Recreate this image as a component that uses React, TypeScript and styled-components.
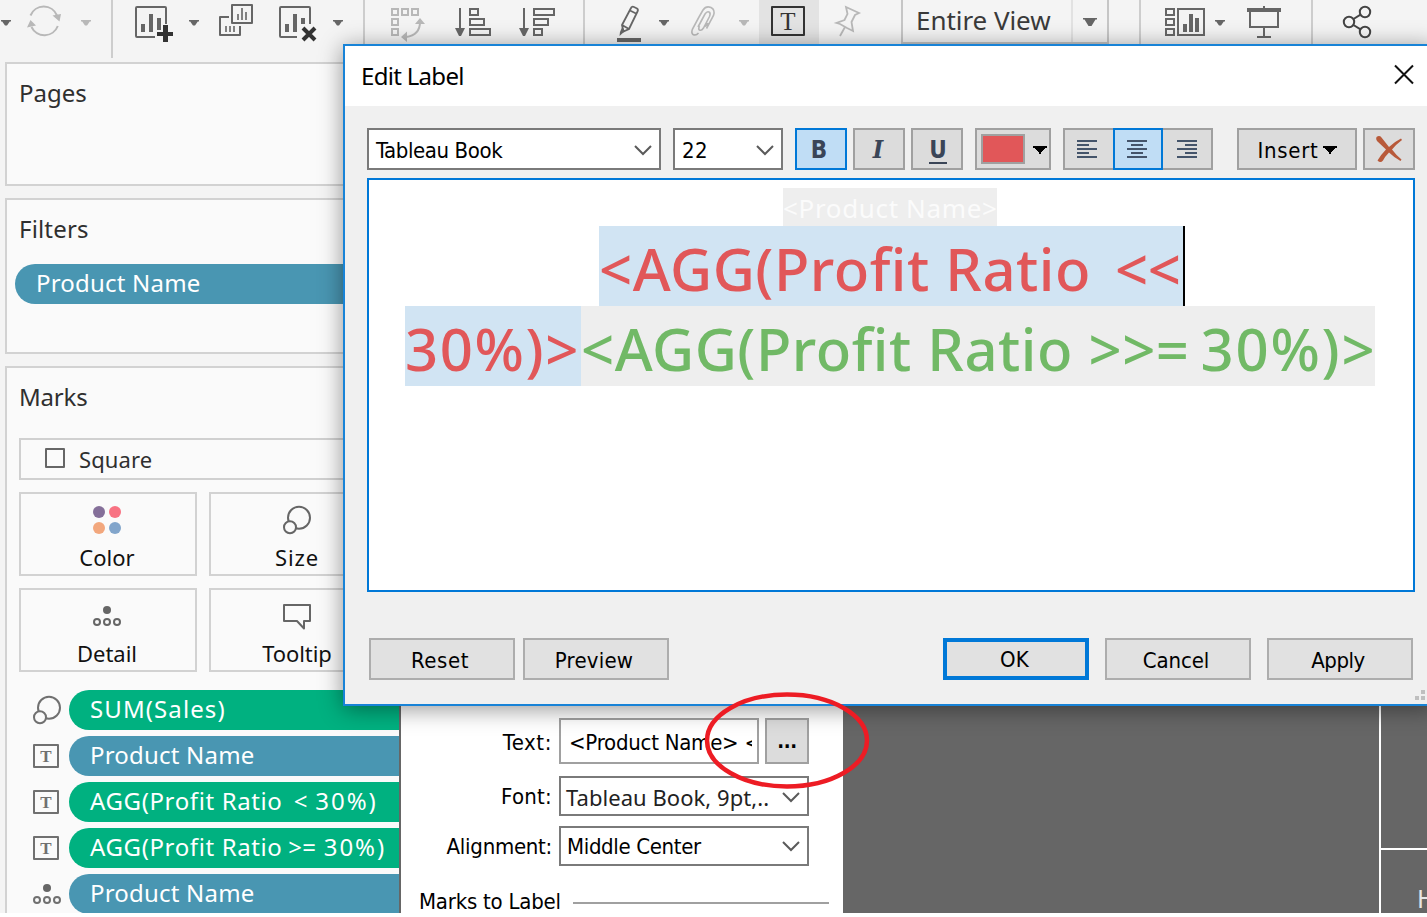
import React from "react";
import styled, { createGlobalStyle, css } from "styled-components";

const uiFont = '"Noto Sans", "Open Sans", sans-serif';
const formFont = '"DejaVu Sans Condensed", "DejaVu Sans", sans-serif';
const ink = "#666666";
const faded = "#b8b8b8";

const GlobalStyle = createGlobalStyle`
  *, *::before, *::after { box-sizing: border-box; }
  body { margin: 0; background: #ffffff; }
`;

const Screen = styled.div`
  position: relative;
  width: 1427px;
  height: 913px;
  overflow: hidden;
  background: #f4f4f4;
  font-family: ${uiFont};
  color: #2f2f2f;
  display: flex;
  flex-direction: column;
`;

/* ---------- Toolbar ---------- */

const Toolbar = styled.header`
  display: flex;
  height: 62px;
  flex: none;
`;

const Drawing = styled.svg`
  display: block;
  flex: none;
  fill: none;
  stroke-width: 2;
`;

const Separator = styled.span`
  width: 2px;
  height: 58px;
  flex: none;
  background: #cdcdcd;
`;

const ActiveTool = styled.div`
  width: 60px;
  height: 44px;
  flex: none;
  background: #e3e3e3;
  display: flex;
  justify-content: center;
  padding: 6px 2px 0 0;
  margin-right: 4px;
`;

const LetterBox = styled.span<{ $small?: boolean }>`
  display: flex;
  align-items: center;
  justify-content: center;
  width: ${(p) => (p.$small ? 26 : 34)}px;
  height: ${(p) => (p.$small ? 24 : 30)}px;
  border: 2px solid ${(p) => (p.$small ? "#707070" : "#333333")};
  border-radius: 1px;
  color: ${(p) => (p.$small ? "#707070" : "#333333")};
  font: ${(p) => (p.$small ? "bold 17px" : "25px")} / 1 "Liberation Serif", serif;
`;

const ViewSelect = styled.div`
  display: flex;
  width: 208px;
  height: 44px;
  flex: none;
  border: 2px solid #c6c6c6;
  border-top: 0;
`;

const ViewName = styled.span`
  width: 168px;
  padding-left: 13px;
  font-size: 26px;
  line-height: 40px;
  letter-spacing: -0.05px;
  color: #3a3a3a;
  white-space: nowrap;
`;

const ViewArrow = styled.span`
  flex: 1;
  border-left: 2px solid #e2e2e2;
  padding-top: 18px;
  padding-left: 10px;
`;

/* ---------- Side shelves ---------- */

const Body = styled.div`
  display: flex;
  flex: 1;
  min-height: 0;
`;

const Sidebar = styled.aside`
  width: 399px;
  flex: none;
  padding-left: 5px;
  display: flex;
  flex-direction: column;
  gap: 12px;
`;

const Card = styled.section<{ $height: number }>`
  height: ${(p) => p.$height}px;
  flex: none;
  border: 2px solid #d2d2d2;
  border-right: 0;
  background: #fafafa;
  padding-top: 14px;
`;

const CardTitle = styled.h2<{ $spacing?: number }>`
  margin: 0 0 0 12px;
  font-size: 24px;
  font-weight: 400;
  line-height: 30px;
  letter-spacing: ${(p) => p.$spacing ?? 0}px;
`;

const Pill = styled.div<{ $measure?: boolean; $spacing?: number }>`
  flex: 1;
  height: 40px;
  padding-left: 21px;
  border-radius: 20px 0 0 20px;
  background: ${(p) => (p.$measure ? "#00b180" : "#4996b2")};
  color: #ffffff;
  font-size: 24px;
  line-height: 38px;
  letter-spacing: ${(p) => p.$spacing ?? 0.2}px;
  white-space: pre;
`;

/* A stretch of text whose tracking differs from the rest of its line. */
const Run = styled.span<{ $spacing: number; $pull?: number }>`
  letter-spacing: ${(p) => p.$spacing}px;
  margin-left: ${(p) => -(p.$pull ?? 0)}px;
`;

const FilterRow = styled.div`
  display: flex;
  margin: 20px 0 0 8px;
`;

const MarkType = styled.div`
  display: flex;
  align-items: center;
  height: 42px;
  margin: 26px 0 0 12px;
  padding-left: 24px;
  border: 2px solid #d0d0d0;
  border-right: 0;
  font-size: 22px;
  line-height: 38px;
  letter-spacing: 0.1px;
`;

const CheckSquare = styled.span`
  width: 20px;
  height: 20px;
  margin: 0 14px 2px 0;
  border: 2px solid ${ink};
  border-radius: 1px;
`;

const MarkGrid = styled.div`
  display: grid;
  grid-template-columns: 178px 178px;
  gap: 12px;
  margin: 12px 0 0 12px;
`;

const MarkButton = styled.div<{ $spacing?: number }>`
  display: flex;
  flex-direction: column;
  align-items: center;
  height: 84px;
  padding: 10px 2px 0 0;
  border: 2px solid #d2d2d2;
  color: #111111;
  font-size: 22px;
  line-height: 28px;
  letter-spacing: ${(p) => p.$spacing ?? 0}px;
`;

const MarkGlyph = styled(Drawing)`
  margin-bottom: 7px;
`;

const MarkRows = styled.div`
  display: flex;
  flex-direction: column;
  gap: 6px;
  margin-top: 18px;
`;

const MarkRow = styled.div`
  display: flex;
  align-items: center;
  padding-left: 26px;
`;

const MarkRowIcon = styled.span`
  width: 36px;
  flex: none;
`;

/* ---------- Canvas ---------- */

const Canvas = styled.main`
  flex: 1;
  display: flex;
  justify-content: flex-end;
  background: #666666;
`;

const EdgeColumn = styled.div`
  width: 48px;
  border-left: 2px solid #ffffff;
  display: flex;
  flex-direction: column;
`;

const EdgeCell = styled.div`
  height: 788px;
  flex: none;
  border-bottom: 2px solid #ffffff;
`;

const EdgeLabel = styled.div`
  padding: 31px 0 0 36px;
  color: #e6e6e6;
  font-size: 25px;
  line-height: 34px;
  white-space: nowrap;
`;

/* ---------- Label options popup ---------- */

const Popup = styled.div`
  position: absolute;
  left: 399px;
  top: 690px;
  width: 444px;
  height: 223px;
  padding: 28px 14px 0 18px;
  border-left: 2px solid #666666;
  background: #ffffff;
  color: #000000;
  font-family: ${formFont};
  font-size: 22px;
  overflow: hidden;
`;

const FormRow = styled.div<{ $height: number; $gap: number }>`
  display: flex;
  height: ${(p) => p.$height}px;
  margin-bottom: ${(p) => p.$gap}px;
`;

const FormLabel = styled.label<{ $height: number; $spacing: number }>`
  width: 134px;
  padding-right: 1px;
  margin-right: 6px;
  flex: none;
  text-align: right;
  line-height: ${(p) => p.$height}px;
  letter-spacing: ${(p) => p.$spacing}px;
  white-space: nowrap;
`;

const TextField = styled.div`
  width: 200px;
  padding: 1px 5px 0 8px;
  border: 2px solid #a0a0a0;
  line-height: 43px;
  letter-spacing: -0.25px;
`;

const Clip = styled.div`
  overflow: hidden;
  white-space: nowrap;
`;

const MoreButton = styled.div`
  width: 44px;
  margin-left: 6px;
  border: 2px solid #a0a0a0;
  background: #dcdcdc;
  text-align: center;
  font-weight: 700;
  font-size: 20px;
  line-height: 42px;
  letter-spacing: -0.4px;
`;

const SectionRow = styled.div`
  display: flex;
  align-items: center;
  height: 30px;
  line-height: 30px;
  letter-spacing: -0.22px;
  white-space: nowrap;
`;

const Rule = styled.span`
  flex: 1;
  height: 2px;
  margin: 2px 0 0 12px;
  background: #a0a0a0;
`;

/* ---------- Dialog ---------- */

const Dialog = styled.div`
  position: absolute;
  left: 343px;
  top: 44px;
  width: 1092px;
  height: 662px;
  display: flex;
  flex-direction: column;
  border: 2px solid #1883d7;
  background: #f0f0f0;
  box-shadow: 0 3px 22px rgba(0, 0, 0, 0.42);
  color: #000000;
  font-family: ${formFont};
  font-size: 22px;
`;

const TitleBar = styled.div`
  display: flex;
  justify-content: space-between;
  height: 60px;
  padding-left: 16px;
  background: #ffffff;
  font-family: ${uiFont};
  font-size: 24px;
  line-height: 60px;
  letter-spacing: -0.7px;
`;

const FormatBar = styled.div`
  display: flex;
  height: 42px;
  margin: 22px 0 8px 22px;
`;

const Combo = styled.div<{ $width: number; $spacing?: number; $pad?: number; $ui?: boolean; $drop?: number }>`
  display: flex;
  align-items: center;
  justify-content: space-between;
  width: ${(p) => p.$width}px;
  flex: none;
  padding: ${(p) => p.$drop ?? 0}px 7px 0 ${(p) => p.$pad ?? 7}px;
  border: 2px solid #7a7a7a;
  background: #ffffff;
  letter-spacing: ${(p) => p.$spacing ?? 0}px;
  white-space: nowrap;
  ${(p) =>
    p.$ui &&
    css`
      font-family: ${uiFont};
      color: #222222;
    `}
`;

const ComboSpacer = styled.span`
  width: 12px;
  flex: none;
`;

const ToolButton = styled.div<{ $width?: number; $on?: boolean; $left?: number }>`
  display: flex;
  align-items: center;
  justify-content: center;
  width: ${(p) => p.$width ?? 52}px;
  flex: none;
  margin-left: ${(p) => p.$left ?? 6}px;
  border: 2px solid ${(p) => (p.$on ? "#0078d7" : "#a0a0a0")};
  background: ${(p) => (p.$on ? "#c0ddf5" : "#dcdcdc")};
`;

const StyleLetter = styled.span<{ $kind: "bold" | "italic" | "underline" }>`
  color: #3a4557;
  font: bold 24px / 24px ${formFont};
  margin: 2px 4px 0 0;
  ${(p) =>
    p.$kind === "italic" &&
    css`
      font: italic bold 25px / 24px "DejaVu Serif Condensed", "DejaVu Serif", serif;
      margin-right: 2px;
    `}
  ${(p) =>
    p.$kind === "underline" &&
    css`
      height: 25px;
      margin: 4px 0 0 2px;
      line-height: 23px;
      border-bottom: 2px solid #3a4557;
    `}
`;

const Swatch = styled.span`
  width: 44px;
  height: 30px;
  margin: 0 8px 0 2px;
  border: 2px solid #a0a0a0;
  background: #e15759;
`;

const Segments = styled.div`
  display: flex;
  margin-left: 12px;
  width: 150px;
  border: 2px solid #a0a0a0;
  background: #dcdcdc;
`;

const Segment = styled.div<{ $on?: boolean }>`
  display: flex;
  align-items: center;
  justify-content: center;
  width: 50px;
  flex: none;
  margin: -2px 0;
  padding-right: 2px;
  border: 2px solid ${(p) => (p.$on ? "#0078d7" : "transparent")};
  background: ${(p) => (p.$on ? "#c0ddf5" : "transparent")};
  &:first-child { margin-left: -2px; }
`;

const InsertText = styled.span`
  margin: 2px 5px 0 1px;
  letter-spacing: 0.7px;
`;

const Editor = styled.div`
  width: 1048px;
  height: 414px;
  margin-left: 22px;
  padding: 8px 2px 0 0;
  border: 2px solid #0078d7;
  background: #ffffff;
  display: flex;
  flex-direction: column;
  align-items: center;
  font-family: ${uiFont};
`;

const Line = styled.div<{ $shift?: number }>`
  display: flex;
  white-space: pre;
  margin-left: ${(p) => p.$shift ?? 0}px;
`;

const NameField = styled.span`
  height: 38px;
  width: 214px;
  background: #eeeeee;
  color: #fbfbfb;
  font-size: 26px;
  line-height: 40px;
  letter-spacing: 0.65px;
`;

const Field = styled.span<{ $width: number; $spacing: number; $selected?: boolean }>`
  height: 80px;
  width: ${(p) => p.$width}px;
  background: ${(p) => (p.$selected ? "#d1e4f3" : "#eeeeee")};
  color: ${(p) => (p.$selected ? "#e15759" : "#71b966")};
  font-size: 58px;
  font-weight: 500;
  line-height: 85px;
  letter-spacing: ${(p) => p.$spacing}px;
`;

const TextCursor = styled.span`
  width: 2px;
  height: 80px;
  background: #000000;
`;

const Actions = styled.div`
  display: flex;
  gap: 16px;
  margin: 46px 0 0 24px;
`;

const ActionButton = styled.div<{ $primary?: boolean; $spacing?: number }>`
  width: 146px;
  height: 42px;
  padding: ${(p) => (p.$primary ? "0 3px 0 0" : "2px 4px 0 0")};
  border: ${(p) => (p.$primary ? "4px solid #0078d7" : "2px solid #adadad")};
  background: #e1e1e1;
  text-align: center;
  line-height: ${(p) => (p.$primary ? 36 : 37)}px;
  letter-spacing: ${(p) => p.$spacing ?? 0}px;
  &:nth-child(2) { margin-left: -8px; }
  &:nth-child(3) { margin-left: 258px; }
`;

const Grip = styled(Drawing)`
  position: absolute;
  left: 1070px;
  bottom: 4px;
`;

const Callout = styled(Drawing)`
  position: absolute;
  left: 703px;
  top: 690px;
`;

/* ---------- Drawings ---------- */

type StripProps = { x: number; w: number; color?: string; children?: React.ReactNode };

const Strip = ({ x, w, color = ink, children }: StripProps) => (
  <Drawing width={w} height={44} viewBox={`${x} 0 ${w} 44`} stroke={color}>
    {children}
  </Drawing>
);

const SmallCaret = ({ x, color = ink }: { x: number; color?: string }) => (
  <path d={`M${x - 5} 20h10v1.5h-1.2l-2.8 4h-2l-2.8-4h-1.2z`} fill={color} stroke="none" />
);

const Bars = ({ x, y, color = ink, cut }: { x: number; y: number; color?: string; cut?: boolean }) => (
  <path
    d={`M${x} ${y + 10}h4v8h-4zM${x + 8} ${y}h4v18h-4zM${x + 16} ${y + 4}h4v${cut ? 6 : 12}h-4z`}
    fill={color}
    stroke="none"
  />
);

const BlackCaret = () => (
  <Drawing width={14} height={10} viewBox="0 -2 14 10">
    <path d="M0 0h14v2h-2v1h-1v1h-1v1h-1v1H8v2H6V6H5V5H4V4H3V3H2V2H0z" fill="#000" />
  </Drawing>
);

const Chevron = () => (
  <Drawing width={18} height={12} viewBox="0 0 18 12" stroke="#5a5a5a">
    <path d="M1 2l8 8 8-8" />
  </Drawing>
);

const AlignIcon = ({ shift }: { shift: number }) => (
  <Drawing width={20} height={18} viewBox="0 0 20 18" stroke="#44546a">
    <path d={`M0 1h20M${shift} 5h12M0 9h20M${shift} 13h12M0 17h20`} />
  </Drawing>
);

const SizeShape = () => (
  <>
    <circle cx="16" cy="13.7" r="11" />
    <circle cx="7" cy="23.3" r="6" fill="#fafafa" />
  </>
);

const DetailShape = () => (
  <>
    <circle cx="14" cy="6" r="4" fill={ink} stroke="none" />
    <circle cx="4" cy="18" r="3" />
    <circle cx="14" cy="18" r="3" />
    <circle cx="24" cy="18" r="3" />
  </>
);

const MainToolbar = () => (
  <Toolbar>
    <Strip x={0} w={111}>
      <SmallCaret x={6} />
      <g stroke={faded}>
        <path d="M30.5 15.5A14.3 14.3 0 0 1 57 15.5M57.8 26A14.3 14.3 0 0 1 31.5 27" />
        <path d="M52.5 15.5l8.5-1.5-1.5 7.5zM27 27.500l3.500-7.500 5.500 5.500z" fill={faded} stroke="none" />
      </g>
      <SmallCaret x={86} color={faded} />
    </Strip>
    <Separator />
    <Strip x={113} w={250}>
      <path d="M155 37H137a1 1 0 0 1-1-1V8a1 1 0 0 1 1-1h28a1 1 0 0 1 1 1v16" />
      <Bars x={141} y={14} />
      <path d="M163 25h5v17h-5zM157 32h16v4h-16z" fill="#333" stroke="none" />
      <SmallCaret x={194} />
      <path d="M232 5h20v18h-20zM229 17h-9v18h20v-9" strokeLinejoin="round" />
      <path d="M238 14v6M242 8v12M246 12v8M226 26v6M230 26v6M234 26v6" strokeWidth="1.6" />
      <path d="M297 37H281a1 1 0 0 1-1-1V8a1 1 0 0 1 1-1h28a1 1 0 0 1 1 1v16" />
      <Bars x={285} y={14} cut />
      <path d="M303 28l12 12M315 28l-12 12" stroke="#333" strokeWidth="4" />
      <SmallCaret x={338} />
    </Strip>
    <Separator />
    <Strip x={365} w={218}>
      <g stroke={faded}>
        <path d="M392 9h6v6h-6zM402 9h6v6h-6zM412 9h6v6h-6zM392 19h6v6h-6zM392 29h6v6h-6z" />
        <path d="M420 22q0 13-14 15" />
        <path d="M415 24l5-6 5 6zM407 31.500l-6 5.500 6 5z" fill={faded} stroke="none" />
      </g>
      <path d="M460 8v22M524 8v22" />
      <path d="M455 28h10l-4 8h-2zM519 28h10l-4 8h-2z" fill={ink} stroke="none" />
      <path d="M470 9h8v6h-8zM470 19h14v6h-14zM470 29h20v6h-20zM534 9h20v6h-20zM534 19h14v6h-14zM534 29h8v6h-8z" />
    </Strip>
    <Separator />
    <Strip x={585} w={174}>
      <path d="M622 25L631 8q1-2 3-1l3 1.500q1.500 1 .5 3L629 29l-5.500 2.500zM622 25l7 4M630 10.500l7 3.500" strokeWidth="1.8" />
      <path d="M625 31l-5.500 5 .5-4 2-4.500z" fill={ink} stroke="none" />
      <path d="M617 38h24v4h-24z" fill={ink} stroke="none" />
      <SmallCaret x={664} />
      <path
        d="M698 27l7-13q2-3 4-2t.5 4.500l-6 11.500q-2 3-4 2-1.500-1 0-4M708 23q-2 4-4.500 3.500M699 17l-6.500 12q-1.500 4 .5 5.500 3 1.500 5.500-1.500M699 17l4-7q3-4.500 8-2.500 4.500 2.500 2.500 8l-7 13"
        stroke={faded}
        strokeWidth="1.6"
      />
      <SmallCaret x={744} color={faded} />
    </Strip>
    <ActiveTool>
      <LetterBox>T</LetterBox>
    </ActiveTool>
    <Strip x={823} w={78} color={faded}>
      <path d="M846 7l13 6-4 2-3.500 7 1.500 9-6-3-7-4-3.500-1 8-3 3-6zM845 27l-5 9" strokeWidth="1.8" />
    </Strip>
    <ViewSelect>
      <ViewName>Entire View</ViewName>
      <ViewArrow>
        <Drawing width={14} height={8} viewBox="0 0 14 8">
          <path d="M0 0h14v1.500h-1.500L8.500 8h-3L1.500 1.500H0z" fill={ink} />
        </Drawing>
      </ViewArrow>
    </ViewSelect>
    <Strip x={1109} w={30} />
    <Separator />
    <Strip x={1141} w={170}>
      <path d="M1166 9h8v6h-8zM1166 19h8v6h-8zM1166 29h8v6h-8zM1178 9h26v26h-26z" />
      <path d="M1183 24h4v8h-4zM1189 14h4v18h-4zM1195 18h4v14h-4z" fill={ink} stroke="none" />
      <SmallCaret x={1220} />
      <path d="M1250 10v17h28V10M1264 27v9M1257 37h14M1264 6v3" />
      <path d="M1247 8h34v4h-34z" fill={ink} stroke="none" />
    </Strip>
    <Separator />
    <Strip x={1313} w={114} color="#444">
      <circle cx="1365" cy="12" r="5.200" />
      <circle cx="1349" cy="22" r="5.200" />
      <circle cx="1365" cy="32" r="5.200" />
      <path d="M1353.500 19l7-4.300M1353.500 25l7 4.300" />
    </Strip>
  </Toolbar>
);

const LabelOptions = () => (
  <Popup>
    <FormRow $height={46} $gap={12}>
      <FormLabel $height={49} $spacing={0.6}>Text:</FormLabel>
      <TextField>
        <Clip>&lt;Product Name&gt; &lt;</Clip>
      </TextField>
      <MoreButton>...</MoreButton>
    </FormRow>
    <FormRow $height={40} $gap={10}>
      <FormLabel $height={41} $spacing={0.25}>Font:</FormLabel>
      <Combo $width={250} $pad={5} $spacing={0.05} $drop={2} $ui>
        Tableau Book, 9pt,..
        <Chevron />
      </Combo>
    </FormRow>
    <FormRow $height={40} $gap={21}>
      <FormLabel $height={41} $spacing={-0.27}>Alignment:</FormLabel>
      <Combo $width={250} $pad={6} $spacing={-0.35}>
        Middle Center
        <Chevron />
      </Combo>
    </FormRow>
    <SectionRow>
      Marks to Label
      <Rule />
    </SectionRow>
  </Popup>
);

const EditLabelDialog = () => (
  <Dialog>
    <TitleBar>
      Edit Label
      <Drawing width={52} height={60} viewBox="0 0 52 60" stroke="#111">
        <path d="M14 19.500l18 18M32 19.500l-18 18" />
      </Drawing>
    </TitleBar>
    <FormatBar>
      <Combo $width={294} $spacing={-0.4} $drop={2}>
        Tableau Book
        <Chevron />
      </Combo>
      <ComboSpacer />
      <Combo $width={110} $spacing={0.4} $drop={2}>
        22
        <Chevron />
      </Combo>
      <ToolButton $left={12} $on>
        <StyleLetter $kind="bold">B</StyleLetter>
      </ToolButton>
      <ToolButton>
        <StyleLetter $kind="italic">I</StyleLetter>
      </ToolButton>
      <ToolButton>
        <StyleLetter $kind="underline">U</StyleLetter>
      </ToolButton>
      <ToolButton $left={12} $width={76}>
        <Swatch />
        <BlackCaret />
      </ToolButton>
      <Segments>
        <Segment><AlignIcon shift={0} /></Segment>
        <Segment $on><AlignIcon shift={4} /></Segment>
        <Segment><AlignIcon shift={8} /></Segment>
      </Segments>
      <ToolButton $left={24} $width={120}>
        <InsertText>Insert</InsertText>
        <BlackCaret />
      </ToolButton>
      <ToolButton>
        <Drawing width={28} height={30} viewBox="0 0 28 30">
          <path d="M1.500 3q3-2 5 .5l7.500 9.500Q19 8 26 4.500l1 1.500Q21 10.500 17 15.500q4 5.500 9.500 10l-1 1.500Q18.500 23 14 18.500q-4 4-6 8-2.500 3-5.500 0Q6 20.500 11 15.500L2 7q-1.500-2-.5-4z" fill="#b85a3a" />
        </Drawing>
      </ToolButton>
    </FormatBar>
    <Editor>
      <Line>
        <NameField>&lt;Product Name&gt;</NameField>
      </Line>
      <Line $shift={4}>
        <Field $width={584} $spacing={0.5} $selected>
          {"<AGG(Profit Ratio "}
          <Run $spacing={-0.5} $pull={6}>{" <<"}</Run>
        </Field>
        <TextCursor />
      </Line>
      <Line>
        <Field $width={176} $spacing={1.6} $selected>{"30%)>"}</Field>
        <Field $width={794} $spacing={0.5}>
          {"<AGG(Profit Ratio >>="}
          <Run $spacing={1.8} $pull={6}>{" 30%)>"}</Run>
        </Field>
      </Line>
    </Editor>
    <Actions>
      <ActionButton $spacing={0.6}>Reset</ActionButton>
      <ActionButton $spacing={0.2}>Preview</ActionButton>
      <ActionButton $primary $spacing={0.3}>OK</ActionButton>
      <ActionButton $spacing={-0.1}>Cancel</ActionButton>
      <ActionButton $spacing={-0.5}>Apply</ActionButton>
    </Actions>
    <Grip width={12} height={10} viewBox="0 0 12 10">
      <path d="M6 0h4v4H6zM0 6h4v4H0zM6 6h4v4H6z" fill="#bfbfbf" />
    </Grip>
  </Dialog>
);

const App = () => (
  <>
    <GlobalStyle />
    <Screen>
      <MainToolbar />
      <Body>
        <Sidebar>
          <Card $height={124}>
            <CardTitle>Pages</CardTitle>
          </Card>
          <Card $height={156}>
            <CardTitle $spacing={0.17}>Filters</CardTitle>
            <FilterRow>
              <Pill>Product Name</Pill>
            </FilterRow>
          </Card>
          <Card $height={560}>
            <CardTitle $spacing={-0.2}>Marks</CardTitle>
            <MarkType>
              <CheckSquare />
              Square
            </MarkType>
            <MarkGrid>
              <MarkButton>
                <MarkGlyph width={28} height={32} viewBox="0 0 28 32">
                  <circle cx="6" cy="8" r="6" fill="#846f99" />
                  <circle cx="22" cy="8" r="6" fill="#f87282" />
                  <circle cx="6" cy="24" r="6" fill="#f2a77d" />
                  <circle cx="22" cy="24" r="6" fill="#82a5cb" />
                </MarkGlyph>
                Color
              </MarkButton>
              <MarkButton $spacing={0.9}>
                <MarkGlyph width={28} height={32} viewBox="0 0 28 32" stroke={ink}>
                  <SizeShape />
                </MarkGlyph>
                Size
              </MarkButton>
              <MarkButton>
                <MarkGlyph width={28} height={32} viewBox="0 -4 28 32" stroke={ink}>
                  <DetailShape />
                </MarkGlyph>
                Detail
              </MarkButton>
              <MarkButton $spacing={-0.1}>
                <MarkGlyph width={28} height={32} viewBox="0 0 28 32" stroke={ink}>
                  <path d="M1 5h26v16h-6v7.500L14 21H1z" strokeLinejoin="round" />
                </MarkGlyph>
                Tooltip
              </MarkButton>
            </MarkGrid>
            <MarkRows>
              <MarkRow>
                <MarkRowIcon>
                  <Drawing width={28} height={32} viewBox="0 0 28 32" stroke="#707070">
                    <SizeShape />
                  </Drawing>
                </MarkRowIcon>
                <Pill $measure $spacing={1.1}>SUM(Sales)</Pill>
              </MarkRow>
              <MarkRow>
                <MarkRowIcon><LetterBox $small>T</LetterBox></MarkRowIcon>
                <Pill>Product Name</Pill>
              </MarkRow>
              <MarkRow>
                <MarkRowIcon><LetterBox $small>T</LetterBox></MarkRowIcon>
                <Pill $measure $spacing={0.62}>
                  {"AGG(Profit Ratio"}
                  <Run $spacing={0.4} $pull={2}>{"  <"}</Run>
                  <Run $spacing={2} $pull={1}>{" 30%)"}</Run>
                </Pill>
              </MarkRow>
              <MarkRow>
                <MarkRowIcon><LetterBox $small>T</LetterBox></MarkRowIcon>
                <Pill $measure $spacing={0.62}>
                  {"AGG(Profit Ratio"}
                  <Run $spacing={0.4} $pull={1}>{" >="}</Run>
                  <Run $spacing={2} $pull={1}>{" 30%)"}</Run>
                </Pill>
              </MarkRow>
              <MarkRow>
                <MarkRowIcon>
                  <Drawing width={28} height={22} viewBox="0 1 28 22" stroke="#707070">
                    <DetailShape />
                  </Drawing>
                </MarkRowIcon>
                <Pill>Product Name</Pill>
              </MarkRow>
            </MarkRows>
          </Card>
        </Sidebar>
        <Canvas>
          <EdgeColumn>
            <EdgeCell />
            <EdgeLabel>H</EdgeLabel>
          </EdgeColumn>
        </Canvas>
      </Body>
      <LabelOptions />
      <EditLabelDialog />
      <Callout width={168} height={102} viewBox="0 0 168 102" stroke="#ed1c24">
        <ellipse cx="84" cy="50.500" rx="80" ry="46" strokeWidth="4.500" />
      </Callout>
    </Screen>
  </>
);

export default App;
